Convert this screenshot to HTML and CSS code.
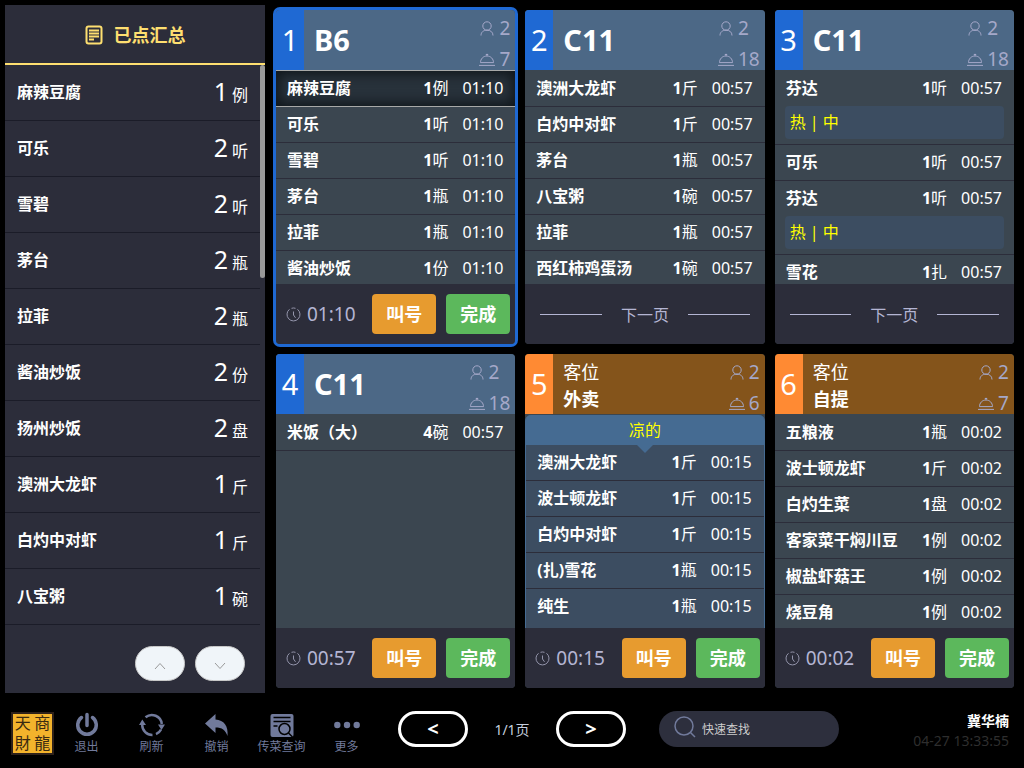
FILE: index.html
```html
<!DOCTYPE html>
<html lang="zh-CN">
<head>
    <meta charset="UTF-8">
    <title>已点汇总</title>
    <link rel="stylesheet" href="styles.css">
</head>
<body>
    <svg class="sprite" aria-hidden="true">
        <symbol id="i-person" viewBox="0 0 15 15"><path d="M1.500 14.500C1.500 11 4 9.200 7.500 9.200S13.500 11 13.500 14.500M7.500 9.200A4.200 4.200 0 1 1 7.500 .8A4.200 4.200 0 0 1 7.500 9.200Z"/></symbol>
        <symbol id="i-dish" viewBox="0 0 16 13"><path d="M0 12.400H16M1.500 9.600C1.500 6 4.200 3 8 3S14.500 6 14.500 9.600ZM8 3V.8M6.800 1.500H9.200"/></symbol>
        <symbol id="i-clock" viewBox="0 0 15 15"><path d="M3.500 2.300A6.500 6.500 0 1 0 11.500 2.300M5.500 1.300A6.500 6.500 0 0 1 9.500 1.300M7.500 4.500V8L9.500 10.800"/></symbol>
    </svg>

    <div class="main">
        <aside class="summary">
            <h1 class="summary-title">
                <svg width="18" height="20" viewBox="0 0 18 20"><rect x="1.500" y="1.500" width="15" height="17" rx="2"/><path d="M4 5.500H14M4 8.500H14M4 11.500H14M4 14.500H9"/></svg>
                已点汇总
            </h1>
            <ul class="summary-list" id="summaryList"></ul>
            <div class="summary-pager">
                <button aria-label="向上"><svg width="12" height="8" viewBox="0 0 12 8"><path d="M1 7L6 1.500L11 7"/></svg></button>
                <button aria-label="向下"><svg width="12" height="8" viewBox="0 0 12 8"><path d="M1 1L6 6.500L11 1"/></svg></button>
            </div>
            <div class="scrollbar"></div>
        </aside>
        <main class="cards" id="cards"></main>
    </div>

    <footer class="toolbar">
        <div class="logo"><span>天</span><span>商</span><span>財</span><span>龍</span></div>
        <nav class="tools">
            <button>
                <svg width="26" height="26" viewBox="0 0 26 26"><path class="line" d="M7.500 5.500A9.300 9.300 0 1 0 18.500 5.500M13 2.500V13.500"/></svg>
                退出
            </button>
            <button>
                <svg width="26" height="26" viewBox="0 0 26 26"><path class="line thin" d="M6.500 5.300A10 10 0 0 1 22.800 12M22 17.500A10 10 0 0 1 17 22.200M3.200 13A10 10 0 0 0 13.500 23"/><path d="M0 13L3.300 7.500L7 13ZM19 12.500H26L22.500 18Z"/></svg>
                刷新
            </button>
            <button>
                <svg width="26" height="26" viewBox="0 0 26 26"><path d="M1 11.500L11.500 2V7.500C20 8 24.500 14 23.500 24C21.500 18 18 15.500 11.500 15.500V21Z"/></svg>
                撤销
            </button>
            <button>
                <svg width="26" height="26" viewBox="0 0 26 26"><rect x="1.500" y="2" width="23" height="23" rx="2"/><path class="cut" d="M4.500 5.500H21.500M4.500 9.500H21.500M4.500 14H8.500"/><circle class="cut" cx="15.500" cy="17" r="5.500"/><path class="cut" d="M19.500 21L23.500 25"/></svg>
                传菜查询
            </button>
            <button>
                <svg width="26" height="26" viewBox="0 0 26 26"><circle cx="3.300" cy="13" r="3.200"/><circle cx="13" cy="13" r="3.200"/><circle cx="22.700" cy="13" r="3.200"/></svg>
                更多
            </button>
        </nav>
        <div class="pager">
            <button>&lt;</button>
            <span>1/1页</span>
            <button>&gt;</button>
        </div>
        <label class="search">
            <svg width="22" height="22" viewBox="0 0 22 22"><circle cx="10" cy="10" r="9"/><path d="M16.500 16.500L21 21"/></svg>
            <input type="text" placeholder="快速查找" aria-label="快速查找">
        </label>
        <div class="user">
            <strong>冀华楠</strong>
            <time>04-27 13:33:55</time>
        </div>
    </footer>

    <script src="app.js"></script>
</body>
</html>
```
FILE: styles.css
```css
* { box-sizing: border-box; }
body {
    margin: 0;
    height: 100vh;
    display: flex;
    flex-direction: column;
    background: #000;
    color: #fff;
    font: 16px "Noto Sans", "Noto Sans CJK SC", sans-serif;
}
button {
    border: 0;
    padding: 0;
    background: none;
    color: inherit;
    font: inherit;
    cursor: pointer;
}
ul { list-style: none; margin: 0; padding: 0; }
svg { fill: none; stroke: currentColor; }
.sprite { position: absolute; width: 0; height: 0; }

.main { flex: 1; min-height: 0; display: flex; }

/* left summary */
.summary {
    position: relative;
    width: 260px;
    margin: 5px 0 5px 5px;
    display: flex;
    flex-direction: column;
    background: #2c2d3a;
}
.summary-title {
    display: flex;
    align-items: center;
    justify-content: center;
    gap: 11px;
    height: 60px;
    margin: 0;
    padding-top: 2px;
    border-bottom: 2px solid #fedf70;
    color: #fedf70;
    font-size: 18px;
    line-height: 26px;
}
.summary-title svg { stroke-width: 2; }
.summary-list { flex: 1; min-height: 0; overflow: hidden; margin-right: 5px; }
.summary-list li {
    display: flex;
    align-items: center;
    justify-content: space-between;
    height: 56px;
    padding: 0 12px;
    border-bottom: 1px solid #1b1c28;
    font-weight: bold;
}
.summary-list .dish { padding-bottom: 4px; }
.summary-list .num { font-weight: normal; line-height: 32px; }
.summary-list .num b { margin-right: 4px; font-size: 25px; font-weight: normal; }
.summary-pager {
    display: flex;
    justify-content: flex-end;
    gap: 10px;
    padding: 12px 20px;
}
.summary-pager button {
    width: 50px;
    height: 35px;
    border: 1px solid #c8c8c8;
    border-radius: 18px;
    background: #f0f5f9;
    color: #999;
    line-height: 1;
}
.scrollbar {
    position: absolute;
    top: 60px;
    right: 0;
    width: 5px;
    height: 213px;
    border-radius: 3px;
    background: #999;
}

/* order cards */
.cards {
    flex: 1;
    display: grid;
    grid-template-columns: repeat(3, minmax(0, 1fr));
    grid-template-rows: repeat(2, minmax(0, 1fr));
    gap: 10px;
    padding: 10px 10px 10px 11px;
}
.card {
    display: flex;
    flex-direction: column;
    overflow: hidden;
    border-radius: 4px;
    background: #3b4650;
}
.card.active { box-shadow: 0 0 0 3px #1f69d3; }
.card-head { display: flex; height: 60px; background: #4c6886; }
.card-no {
    width: 28px;
    background: #1f69d3;
    font-size: 29px;
    line-height: 60px;
    text-align: center;
}
.card-name {
    flex: 1;
    margin: 0;
    padding-left: 10px;
    font-size: 29px;
    line-height: 60px;
}
.takeout .card-head { background: #84541b; }
.takeout .card-no { background: #ff8a33; }
.takeout .card-name { padding-top: 5px; font-size: 18px; line-height: 27px; }
.card-name small { display: block; font-size: 18px; font-weight: normal; }
.card-meta {
    padding: 3px 5px 0 0;
    color: #a5a8c9;
    font-size: 19px;
    line-height: 31px;
}
.card-meta div { display: flex; align-items: center; gap: 4px; }
.card-meta svg { width: 16px; height: 15px; }

.items { flex: 1; min-height: 0; overflow: hidden; padding-top: 1px; }
.active .items { padding-top: 0; }
.items li { border-bottom: 1px solid #2c2d3a; }
.item { display: flex; height: 35px; padding: 0 12px 0 11px; line-height: 35px; }
.item .dish { flex: 1; font-weight: bold; white-space: nowrap; }
.item .time { margin-left: 14px; }
.items li.selected {
    border: 1px solid #a8a9a8;
    border-width: 1px 0;
    background: #28323b;
    box-shadow: inset 0 0 12px 3px #10161b;
}
.remark {
    height: 33px;
    margin: 0 10px 5px;
    padding: 0 5px;
    border-radius: 4px;
    background: #3c4d61;
    color: #ff0;
    line-height: 33px;
}
.group {
    height: 100%;
    border: 1px solid #456b92;
    border-width: 0 1px;
    border-radius: 6px 6px 0 0;
    background: #3c4d61;
}
.group-title {
    position: relative;
    height: 30px;
    border-radius: 5px 5px 0 0;
    background: #456b92;
    color: #ff0;
    line-height: 30px;
    text-align: center;
}
.group-title::after {
    content: "";
    position: absolute;
    top: 100%;
    left: 50%;
    margin-left: -8px;
    border: 8px solid transparent;
    border-top-color: #456b92;
    border-bottom: 0;
}
.group li:last-child { border-bottom: 0; }

.card-foot {
    display: flex;
    align-items: center;
    gap: 10px;
    height: 60px;
    padding: 0 5px 0 10px;
    background: #2c2d3a;
    color: #b4b5d3;
}
.wait { flex: 1; display: flex; align-items: center; gap: 6px; font-size: 19px; }
.wait svg { width: 15px; height: 15px; color: #9495ab; }
.card-foot .call, .card-foot .done {
    width: 64px;
    height: 40px;
    padding-bottom: 2px;
    border-radius: 4px;
    color: #fff;
    font-size: 18px;
    font-weight: bold;
}
.call { background: #e79b2f; }
.done { background: #5cb85c; }
.next {
    flex: 1;
    display: flex;
    align-items: center;
    gap: 19px;
    padding: 0 10px 0 5px;
}
.next::before, .next::after { content: ""; flex: 1; height: 1px; background: #b4b5d3; }

/* bottom bar */
.toolbar { display: flex; align-items: center; height: 70px; padding: 0 15px 8px 11px; }
.logo {
    display: grid;
    grid-template-columns: 1fr 1fr;
    width: 43px;
    height: 43px;
    margin-top: 9px;
    border: 2px solid #2e211a;
    background: #f3b32c;
    color: #3a2a12;
    font: 16px/19px "Liberation Sans", "Noto Sans CJK TC", sans-serif;
    text-align: center;
}
.tools { display: flex; margin-top: 10px; }
.tools button {
    display: flex;
    flex-direction: column;
    align-items: center;
    width: 65px;
    color: #717a9b;
    font-size: 12px;
    line-height: 18px;
}
.tools svg { fill: currentColor; stroke: none; }
.tools .line { fill: none; stroke: currentColor; stroke-width: 3.5; stroke-linecap: round; }
.tools .thin { stroke-width: 2.5; stroke-linecap: butt; }
.tools .cut { stroke: #000; stroke-width: 1.5; }
.tools circle.cut { fill: #717a9b; }
.pager {
    display: flex;
    align-items: center;
    justify-content: space-between;
    width: 228px;
    margin-left: 19px;
    color: #c5cede;
    font-size: 14px;
}
.pager button {
    width: 70px;
    height: 36px;
    border: 3px solid #fff;
    border-radius: 18px;
    color: #fff;
    font-size: 20px;
    font-weight: bold;
    line-height: 30px;
}
.search {
    display: flex;
    align-items: center;
    gap: 6px;
    width: 180px;
    height: 36px;
    margin-left: 33px;
    padding: 0 15px;
    border-radius: 18px;
    background: #2d2f3d;
}
.search svg { flex: none; margin-bottom: 4px; color: #717a9b; stroke-width: 1.5; }
.search input {
    flex: 1;
    min-width: 0;
    padding: 0;
    border: 0;
    outline: 0;
    background: none;
    color: #fff;
    font: inherit;
    font-size: 12px;
}
.search input::placeholder { color: #ccc; }
.user { flex: 1; margin-top: 4px; text-align: right; font-size: 14px; line-height: 20px; }
.user strong, .user time { display: block; }
.user time { color: #2e2e2e; }
```
FILE: app.js
```js
const summary = [
    ['麻辣豆腐', 1, '例'], ['可乐', 2, '听'], ['雪碧', 2, '听'], ['茅台', 2, '瓶'],
    ['拉菲', 2, '瓶'], ['酱油炒饭', 2, '份'], ['扬州炒饭', 2, '盘'],
    ['澳洲大龙虾', 1, '斤'], ['白灼中对虾', 1, '斤'], ['八宝粥', 1, '碗']
];

const orders = [
    { name: 'B6', people: 2, dishes: 7, time: '01:10', active: true,
      items: [['麻辣豆腐', 1, '例'], ['可乐', 1, '听'], ['雪碧', 1, '听'], ['茅台', 1, '瓶'], ['拉菲', 1, '瓶'], ['酱油炒饭', 1, '份']] },
    { name: 'C11', people: 2, dishes: 18, time: '00:57', more: true,
      items: [['澳洲大龙虾', 1, '斤'], ['白灼中对虾', 1, '斤'], ['茅台', 1, '瓶'], ['八宝粥', 1, '碗'], ['拉菲', 1, '瓶'], ['西红柿鸡蛋汤', 1, '碗']] },
    { name: 'C11', people: 2, dishes: 18, time: '00:57', more: true,
      items: [['芬达', 1, '听', '热 | 中'], ['可乐', 1, '听'], ['芬达', 1, '听', '热 | 中'], ['雪花', 1, '扎']] },
    { name: 'C11', people: 2, dishes: 18, time: '00:57',
      items: [['米饭（大）', 4, '碗']] },
    { name: '外卖', seat: '客位', people: 2, dishes: 6, time: '00:15', group: '凉的',
      items: [['澳洲大龙虾', 1, '斤'], ['波士顿龙虾', 1, '斤'], ['白灼中对虾', 1, '斤'], ['(扎)雪花', 1, '瓶'], ['纯生', 1, '瓶']] },
    { name: '自提', seat: '客位', people: 2, dishes: 7, time: '00:02',
      items: [['五粮液', 1, '瓶'], ['波士顿龙虾', 1, '斤'], ['白灼生菜', 1, '盘'], ['客家菜干焖川豆', 1, '例'], ['椒盐虾菇王', 1, '例'], ['烧豆角', 1, '例']] }
];

function renderItem(order, item, index) {
    const [dish, num, unit, remark] = item;
    return `<li class="${order.active && index === 0 ? 'selected' : ''}">
        <div class="item"><span class="dish">${dish}</span><span><b>${num}</b>${unit}</span><span class="time">${order.time}</span></div>
        ${remark ? `<div class="remark">${remark}</div>` : ''}
    </li>`;
}

function renderOrder(order, index) {
    const list = `<ul>${order.items.map((item, i) => renderItem(order, item, i)).join('')}</ul>`;
    const foot = order.more
        ? '<button class="next">下一页</button>'
        : `<span class="wait"><svg><use href="#i-clock"/></svg>${order.time}</span>
           <button class="call">叫号</button><button class="done">完成</button>`;
    return `<section class="card ${order.active ? 'active' : ''} ${order.seat ? 'takeout' : ''}">
        <header class="card-head">
            <span class="card-no">${index + 1}</span>
            <h2 class="card-name">${order.seat ? `<small>${order.seat}</small>` : ''}${order.name}</h2>
            <div class="card-meta">
                <div><svg><use href="#i-person"/></svg>${order.people}</div>
                <div><svg><use href="#i-dish"/></svg>${order.dishes}</div>
            </div>
        </header>
        <div class="items">${order.group ? `<div class="group"><div class="group-title">${order.group}</div>${list}</div>` : list}</div>
        <footer class="card-foot">${foot}</footer>
    </section>`;
}

document.getElementById('summaryList').innerHTML = summary.map(([dish, num, unit]) =>
    `<li><span class="dish">${dish}</span><span class="num"><b>${num}</b>${unit}</span></li>`).join('');
document.getElementById('cards').innerHTML = orders.map(renderOrder).join('');
```
